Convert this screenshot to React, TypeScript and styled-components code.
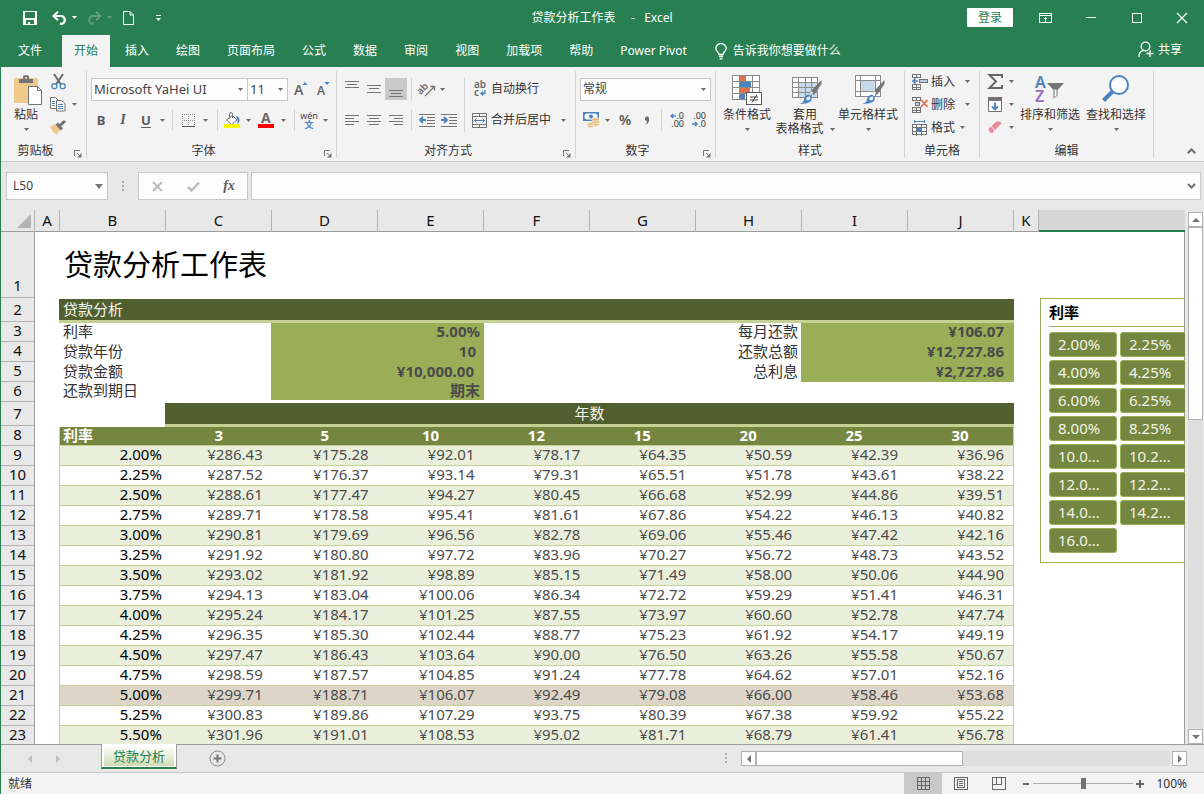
import React from "react";
import styled, { createGlobalStyle, css } from "styled-components";

const c = {
  brand: "#287f51",
  ribbon: "#f3f3f3",
  chrome: "#e8e8e8",
  line: "#c8c8c8",
  gridLine: "#9c9c9c",
  text: "#333333",
  icon: "#737373",
  blue: "#4a83bd",
  olive: "#515f2e",
  oliveMid: "#758640",
  oliveSoft: "#9aae57",
  olivePale: "#c4d193",
  band: "#eaefdc",
  tan: "#ddd5c8",
};

const GlobalStyle = createGlobalStyle`
  * { box-sizing: border-box; }
  body { margin: 0; }
  body, button, input, select, table {
    font-family: "Noto Sans", "Noto Sans CJK SC", sans-serif;
    font-size: 12px;
    color: ${c.text};
  }
  button, input, select { margin: 0; padding: 0; border: 0; background: none; border-radius: 0; outline: 0; }
  button { white-space: nowrap; }
  svg { display: block; flex: none; overflow: visible; }
`;

/* ---------- shell ---------- */

const Shell = styled.div`
  display: flex;
  flex-direction: column;
  height: 100vh;
  overflow: hidden;
`;

const Workspace = styled.main`
  flex: 1;
  min-height: 0;
  display: flex;
  flex-direction: column;
  border-left: 1px solid ${c.brand};
  background: ${c.chrome};
`;

/* ---------- title bar ---------- */

const TitleBar = styled.header`
  display: grid;
  grid-template-columns: 1fr auto 1fr;
  align-items: center;
  height: 35px;
  background: ${c.brand};
`;

const QuickAccess = styled.div`
  display: flex;
  align-items: center;
  gap: 5px;
  padding-left: 17px;
`;

const Title = styled.h1`
  margin: 0;
  font-size: 12px;
  font-weight: 400;
  line-height: 18px;
  color: #fff;
  white-space: pre;
`;

const WindowTools = styled.div`
  display: flex;
  align-items: center;
  justify-content: flex-end;
`;

const LoginButton = styled.button`
  width: 46px;
  height: 19px;
  margin-right: 9px;
  border-radius: 1px;
  background: #fff;
  color: ${c.brand};
  line-height: 19px;
`;

const IconButton = styled.button<{ $w?: number; $h?: number; $on?: boolean }>`
  display: flex;
  flex: none;
  align-items: center;
  justify-content: center;
  width: ${(p) => p.$w ?? 22}px;
  height: ${(p) => p.$h ?? 22}px;
  ${(p) => p.$on && css`background: #c9c9c9;`}
`;

/* ---------- tabs ---------- */

const TabBar = styled.nav`
  display: flex;
  align-items: stretch;
  gap: 3px;
  height: 32px;
  padding-left: 6px;
  background: ${c.brand};
`;

const Tab = styled.button<{ $active?: boolean; $first?: boolean }>`
  padding: 0 12px;
  line-height: 30px;
  margin-right: ${(p) => (p.$first ? 5 : 0)}px;
  color: ${(p) => (p.$active ? c.brand : "#fff")};
  background: ${(p) => (p.$active ? c.ribbon : "transparent")};
`;

const TabAction = styled.button<{ $end?: boolean }>`
  display: flex;
  align-items: center;
  gap: 6px;
  padding: 0 0 0 13px;
  line-height: 30px;
  color: #fff;
  ${(p) => p.$end && css`gap: 4px; margin-left: auto; padding: 0 22px 3px 0;`}
`;

/* ---------- ribbon ---------- */

const Ribbon = styled.section`
  display: flex;
  height: 95px;
  padding: 4px 0;
  background: ${c.ribbon};
  border-bottom: 1px solid ${c.line};
`;

const Group = styled.div<{ $w: number }>`
  display: flex;
  flex-direction: column;
  flex: none;
  width: ${(p) => p.$w}px;
  height: 87px;
  border-right: 1px solid #d4d4d4;
`;

const GroupBody = styled.div<{ $pad?: number }>`
  display: flex;
  flex: 1;
  min-height: 0;
  padding-left: ${(p) => p.$pad ?? 4}px;
`;

const GroupFooter = styled.div`
  display: flex;
  align-items: flex-end;
  height: 15px;
`;

const GroupLabel = styled.span`
  flex: 1;
  line-height: 14px;
  text-align: center;
`;

const RibbonEnd = styled.div`
  display: flex;
  flex: 1;
  align-items: flex-end;
  justify-content: flex-end;
  padding-right: 2px;
`;

const Rows = styled.div`
  display: flex;
  flex-direction: column;
  gap: 9px;
  padding-top: 7px;
`;

const Row = styled.div`
  display: flex;
  align-items: center;
  height: 22px;
`;

const SmallRows = styled.div`
  display: flex;
  flex-direction: column;
  gap: 2px;
`;

const SmallRow = styled.div`
  display: flex;
  align-items: center;
  height: 21px;
`;

const Divider = styled.span<{ $tall?: boolean; $m?: number }>`
  flex: none;
  width: 1px;
  height: ${(p) => (p.$tall ? 54 : 22)}px;
  margin: ${(p) => (p.$tall ? 7 : 0)}px ${(p) => p.$m ?? 5}px 0;
  background: #d4d4d4;
`;

const BigButton = styled.button<{ $w: number }>`
  display: flex;
  flex-direction: column;
  align-items: center;
  width: ${(p) => p.$w}px;
  padding-top: 4px;
  line-height: 14px;
`;

const BigIcon = styled.span`
  height: 33px;
`;

const BigLine = styled.span`
  display: flex;
  align-items: center;
  justify-content: center;
  gap: 6px;
  height: 14px;
`;

const TextButton = styled.button<{ $w?: number }>`
  display: flex;
  align-items: center;
  height: 22px;
  line-height: 20px;
  ${(p) => p.$w && css`width: ${p.$w}px;`}
`;

const IconSlot = styled.span`
  display: flex;
  justify-content: center;
  width: 22px;
`;

const SelectBox = styled.label<{ $w: number; $joined?: boolean }>`
  display: flex;
  align-items: center;
  width: ${(p) => p.$w}px;
  height: 23px;
  padding-right: 4px;
  background: #fdfdfd;
  border: 1px solid ${c.line};
  ${(p) => p.$joined && css`border-left: 0;`}
`;

const Select = styled.select<{ $size?: number }>`
  flex: 1;
  min-width: 0;
  appearance: none;
  padding-left: 2px;
  font-size: ${(p) => p.$size ?? 12}px;
  line-height: 20px;
  color: #444;
`;

const Glyph = styled.span<{ $italic?: boolean; $underline?: boolean; $size?: number }>`
  font-size: ${(p) => p.$size ?? 13}px;
  font-weight: ${(p) => (p.$size ? 600 : 700)};
  line-height: 18px;
  color: #5c5c5c;
  ${(p) => p.$italic && css`font-family: "Liberation Serif", serif; font-style: italic; font-size: 14px;`}
  ${(p) => p.$underline && css`text-decoration: underline; text-underline-offset: 2px;`}
`;

/* ---------- formula bar ---------- */

const FormulaBar = styled.div`
  display: flex;
  align-items: center;
  height: 48px;
  padding: 0 3px 0 5px;
`;

const Field = styled.div<{ $w?: number }>`
  display: flex;
  align-items: center;
  height: 28px;
  background: #fdfdfd;
  border: 1px solid ${c.line};
  ${(p) => (p.$w ? css`flex: none; width: ${p.$w}px;` : css`flex: 1; margin-left: 3px;`)}
  padding-right: 4px;
`;

const FieldInput = styled.input`
  flex: 1;
  min-width: 0;
  padding-left: 6px;
  line-height: 20px;
  color: #444;
`;

const Grip = styled.span`
  display: flex;
  justify-content: center;
  width: 30px;
`;

/* ---------- sheet ---------- */

const SheetArea = styled.div`
  display: flex;
  flex: 1;
  min-height: 0;
`;

const Sheet = styled.div`
  flex: 1;
  min-width: 0;
  overflow: hidden;
`;

const ColumnHeads = styled.div`
  display: flex;
  height: 22px;
`;

const Corner = styled.div`
  display: flex;
  flex: none;
  align-items: center;
  justify-content: flex-end;
  width: 34px;
  padding-right: 3px;
  border-right: 1px solid #b4b4b4;
  border-bottom: 1px solid ${c.gridLine};
`;

const ColumnHead = styled.div<{ $w?: number; $selected?: boolean }>`
  ${(p) => (p.$w ? css`flex: none; width: ${p.$w}px;` : css`flex: 1;`)}
  border-right: 1px solid #b4b4b4;
  border-bottom: 1px solid ${c.gridLine};
  font-size: 15px;
  line-height: 21px;
  text-align: center;
  color: #111;
  ${(p) => p.$selected && css`
    border-right: 0;
    border-bottom: 2px solid ${c.brand};
    background: #d6d6d6;
  `}
`;

const SheetBody = styled.div`
  display: flex;
  align-items: flex-start;
  background: #fff;
  border-right: 1px solid ${c.gridLine};
`;

const RowHeads = styled.div`
  flex: none;
  width: 34px;
  background: ${c.chrome};
  border-right: 1px solid ${c.gridLine};
`;

const RowHead = styled.div<{ $h: number }>`
  display: flex;
  align-items: flex-end;
  justify-content: center;
  height: ${(p) => p.$h}px;
  padding-bottom: 2px;
  border-bottom: 1px solid #b4b4b4;
  font-size: 15px;
  line-height: ${(p) => (p.$h > 20 ? 19 : 17)}px;
  color: #111;
`;

const Content = styled.div`
  flex: none;
  width: 955px;
  margin-left: 24px;
`;

const SheetTitle = styled.h2`
  height: 67px;
  margin: 0;
  padding-left: 5px;
  font-size: 29px;
  font-weight: 400;
  line-height: 65px;
  color: #000;
`;

const SectionBand = styled.div<{ $center?: boolean }>`
  height: 24px;
  padding: 0 4px;
  margin-left: ${(p) => (p.$center ? 106 : 0)}px;
  background: ${c.olive};
  border-bottom: 3px solid ${c.olivePale};
  font-size: 15px;
  line-height: 21px;
  color: #f4f5ee;
  text-align: ${(p) => (p.$center ? "center" : "left")};
`;

const Table = styled.table`
  width: 100%;
  table-layout: fixed;
  border-collapse: separate;
  border-spacing: 0;
`;

const SummaryArea = styled.div`
  height: 80px;
`;

const SummaryRow = styled.tr<{ $h: number }>`
  height: ${(p) => p.$h}px;
`;

const SummaryLabel = styled.th<{ $right?: boolean }>`
  padding: 0 ${(p) => (p.$right ? 3 : 4)}px 2px;
  font-size: 15px;
  font-weight: 400;
  line-height: 15px;
  text-align: ${(p) => (p.$right ? "right" : "left")};
`;

const SummaryValue = styled.td<{ $pad: number }>`
  padding: 0 ${(p) => p.$pad}px 2px 0;
  background: ${c.oliveSoft};
  font-size: 15px;
  font-weight: 700;
  line-height: 15px;
  text-align: right;
  color: #4a4a4a;
`;

const PayTable = styled(Table)`
  border-left: 1px solid ${c.olivePale};
  border-right: 1px solid ${c.olivePale};
`;

const PayHead = styled.th<{ $left?: boolean }>`
  height: 19px;
  padding: 0 3px 3px;
  background: ${c.oliveMid};
  border-bottom: 1px solid ${c.olivePale};
  font-size: 15px;
  line-height: 14px;
  color: #fff;
  text-align: ${(p) => (p.$left ? "left" : "center")};
`;

const PayRow = styled.tr<{ $tone: string }>`
  background: ${(p) => p.$tone};
`;

const PayCell = styled.td`
  height: 20px;
  padding: 0 9px 2px 0;
  border-bottom: 1px solid ${c.olivePale};
  font-size: 15px;
  line-height: 17px;
  text-align: right;
  color: #4c4c4c;
`;

const RateCell = styled(PayCell).attrs({ as: "th" })`
  padding-right: 4px;
  font-weight: 400;
  color: #000;
`;

/* ---------- slicer ---------- */

const Slicer = styled.aside`
  flex: none;
  width: 160px;
  height: 265px;
  margin: 66px 0 0 26px;
  padding-left: 8px;
  border: 1px solid ${c.oliveSoft};
`;

const SlicerTitle = styled.h3`
  margin: 0 0 5px;
  border-bottom: 1px solid ${c.oliveSoft};
  font-size: 15px;
  line-height: 27px;
  color: #000;
`;

const SlicerGrid = styled.div`
  display: grid;
  grid-template-columns: 68px 68px;
  gap: 3px;
`;

const SlicerButton = styled.button`
  height: 25px;
  padding-left: 8px;
  border: 1px solid ${c.oliveSoft};
  border-radius: 3px;
  background: ${c.oliveMid};
  font-size: 15px;
  line-height: 23px;
  text-align: left;
  color: #f1f4e8;
`;

/* ---------- scroll bars ---------- */

const VScroll = styled.div`
  display: flex;
  flex-direction: column;
  flex: none;
  width: 19px;
  padding: 2px 1px 0 3px;
`;

const ScrollButton = styled.button`
  display: flex;
  flex: none;
  align-items: center;
  justify-content: center;
  width: 15px;
  height: 15px;
  background: #fff;
  border: 1px solid #b0b0b0;
`;

const Track = styled.div<{ $horizontal?: boolean }>`
  flex: 1;
  background: #dedede;
  ${(p) => (p.$horizontal ? css`height: 15px; margin-right: 2px;` : css`margin-bottom: 1px;`)}
`;

const Thumb = styled.div<{ $horizontal?: boolean }>`
  background: #fff;
  border: 1px solid #b0b0b0;
  ${(p) => (p.$horizontal ? css`width: 50%; height: 15px;` : css`width: 15px; height: 38.5%;`)}
`;

/* ---------- bottom bars ---------- */

const SheetTabs = styled.div`
  display: flex;
  align-items: center;
  height: 28px;
  padding-left: 15px;
  border-top: 1px solid ${c.gridLine};
`;

const SheetTab = styled.button`
  align-self: flex-start;
  width: 76px;
  height: 25px;
  margin: -1px 30px 0 29px;
  padding: 2px 2px 1px;
  background: #fff;
  border: 1px solid ${c.gridLine};
  border-top: 0;
  border-bottom: 2px solid ${c.brand};
`;

const SheetTabFace = styled.span`
  display: block;
  background: linear-gradient(#fff, #cfdcb4);
  font-size: 13px;
  line-height: 20px;
  color: ${c.brand};
`;

const HScroll = styled.div`
  display: flex;
  align-items: center;
  width: 446px;
  margin-right: 17px;
`;

const Spacer = styled.span`
  flex: 1;
`;

const StatusBar = styled.footer`
  display: flex;
  align-items: center;
  height: 22px;
  padding: 0 17px 0 7px;
  background: ${c.ribbon};
  border-top: 1px solid ${c.line};
  line-height: 18px;
`;

const ZoomSlider = styled.input`
  appearance: none;
  width: 100px;
  height: 14px;
  &::-webkit-slider-runnable-track {
    height: 14px;
    background: linear-gradient(#adadad, #adadad) center / 100% 1px no-repeat;
  }
  &::-webkit-slider-thumb {
    appearance: none;
    width: 5px;
    height: 11px;
    margin-top: 1px;
    background: #737373;
  }
`;

const ZoomValue = styled.span`
  width: 41px;
  text-align: right;
`;

/* ---------- icons ---------- */

type Box = { w: number; h: number; crisp?: boolean; children: React.ReactNode };
const Svg = ({ w, h, crisp, children }: Box) => (
  <svg width={w} height={h} viewBox={`0 0 ${w} ${h}`} fill="none" shapeRendering={crisp ? "crispEdges" : "auto"} aria-hidden="true">
    {children}
  </svg>
);

const Caret = ({ color = "#6a6a6a" }: { color?: string }) => (
  <Svg w={5} h={3}><path d="M0 0h5L2.5 3z" fill={color} /></Svg>
);

const BoxCaret = () => <Svg w={8} h={5}><path d="M0 0h8L4 5z" fill="#777" /></Svg>;

const SaveIcon = () => (
  <Svg w={14} h={14} crisp>
    <path fillRule="evenodd" d="M0 0h14v14H0zM2 1v6h10V1zM3 9v4h2v-2h2v2h4V9z" fill="#fff" />
  </Svg>
);
const UndoIcon = () => (
  <Svg w={15} h={14}>
    <path d="M1.500 5H9a4 4 0 0 1 1 7.800H8M6 .8 1.600 5 6 9.200" stroke="#fff" strokeWidth={2.200} />
  </Svg>
);
const RedoIcon = () => (
  <Svg w={15} h={14}>
    <path d="M13.500 5H6a4 4 0 0 0-1 7.800h2M9 .8 13.400 5 9 9.200" stroke="#5f9f7d" strokeWidth={2} />
  </Svg>
);
const NewIcon = () => (
  <Svg w={11} h={14}><path d="M.5.5h6.500l3.500 3.500v9.500H.5zM7 .5V4h3.500" stroke="#fff" /></Svg>
);
const CustomizeIcon = () => (
  <Svg w={5} h={6}><path d="M0 0h5v1H0zM0 3h5L2.500 6z" fill="#fff" /></Svg>
);
const RibbonModeIcon = () => (
  <Svg w={13} h={10} crisp>
    <path d="M.5.5h12v9H.5zM.5 2.500h12M6.500 4v5M4.500 6.500l2-2 2 2" stroke="#fff" />
  </Svg>
);
const MinIcon = () => <Svg w={10} h={1} crisp><path d="M0 0h10v1H0z" fill="#fff" /></Svg>;
const MaxIcon = () => <Svg w={10} h={10} crisp><path d="M.5.5h9v9h-9z" stroke="#fff" /></Svg>;
const CloseIcon = () => <Svg w={10} h={10}><path d="m0 0 10 10M10 0 0 10" stroke="#fff" strokeWidth={1.200} /></Svg>;

const BulbIcon = () => (
  <Svg w={12} h={17}>
    <path d="M4 11.500C4 9 .8 8.300.8 5.300a5.200 4.800 0 0 1 10.400 0c0 3-3.200 3.700-3.200 6.200zM4 13.500h4M4.500 15.800h3" stroke="#fff" strokeWidth={1.300} />
  </Svg>
);
const ShareIcon = () => (
  <Svg w={16} h={17}>
    <circle cx={7.500} cy={5.500} r={4.300} stroke="#fff" strokeWidth={1.300} />
    <path d="M.8 16c0-3.500 2-6 4.700-6.700M12 9v7M8.500 12.500h7" stroke="#fff" strokeWidth={1.300} />
  </Svg>
);

const PasteIcon = () => (
  <Svg w={32} h={30}>
    <rect x={4} y={3} width={24} height={25} rx={1} fill="#efcb8b" />
    <path d="M9 4h4V1.500Q13 0 16 0t3 1.500V4h4v4H9z" fill="#737373" />
    <rect x={15} y={2} width={2} height={2} fill="#efcb8b" />
    <path d="M18.500 11.500h9l4 4v14h-13z" fill="#fff" stroke="#737373" />
    <path d="M27.500 11.500v4h4" stroke="#737373" />
  </Svg>
);
const CutIcon = () => (
  <Svg w={15} h={16}>
    <path d="M3 0 10 10.500M12 0 5 10.500" stroke="#6a6a6a" strokeWidth={2} />
    <circle cx={3.300} cy={12.200} r={2.500} stroke={c.blue} strokeWidth={1.300} />
    <circle cx={11.700} cy={12.200} r={2.500} stroke={c.blue} strokeWidth={1.300} />
  </Svg>
);
const CopyIcon = () => (
  <Svg w={16} h={15}>
    <path d="M.5.5h5l3 3v8h-8z" fill="#fff" stroke="#737373" />
    <path d="M2 4.500h3M2 6.500h3M2 8.500h3" stroke={c.blue} />
    <path d="M6.500 3.500h5l3.500 3v7.500h-8.500z" fill="#fff" stroke="#737373" />
    <path d="M8 7.500h5M8 9.500h5M8 11.500h5" stroke={c.blue} />
  </Svg>
);
const PainterIcon = () => (
  <Svg w={17} h={15}>
    <path d="m0 7 5-3 5 6-3 4.500-3-1.500z" fill="#efc58a" />
    <path d="m5.500 4.500 2.500-2 5 6-2.500 2z" fill="#737373" />
    <path d="M10 5.500 15 1" stroke="#737373" strokeWidth={3} />
  </Svg>
);
const LauncherIcon = () => (
  <Svg w={8} h={8}>
    <path d="M.5 6V.5H6M3 3l3 3" stroke="#777" />
    <path d="M7.500 3v4.500H3z" fill="#777" />
  </Svg>
);

const GrowFont = () => (
  <Svg w={14} h={16}>
    <text x={0} y={14} fontSize={14} fontWeight={600} fill="#6a6a6a" fontFamily="Noto Sans">A</text>
    <path d="M8.500 4h5L11 1z" fill={c.blue} />
  </Svg>
);
const ShrinkFont = () => (
  <Svg w={14} h={16}>
    <text x={1} y={14} fontSize={12} fontWeight={600} fill="#6a6a6a" fontFamily="Noto Sans">A</text>
    <path d="M8.500 1h5L11 4z" fill={c.blue} />
  </Svg>
);
const BordersIcon = () => (
  <Svg w={13} h={13} crisp>
    <path d="M.5 0v12M6.500 0v12M12.500 0v12M0 .5h13M0 6.500h13" stroke="#8a8a8a" strokeDasharray="1 1" />
    <path d="M0 12.500h13" stroke="#555" />
  </Svg>
);
const FillIcon = () => (
  <Svg w={16} h={16}>
    <path d="M8.500 3.500 13 8l-5.500 4.500L2.500 8z" fill="#fff" stroke="#737373" />
    <path d="M5.500 6.500V2q0-1.500 1.500-1.500T8.500 2v4" stroke="#737373" />
    <path d="M12 4q4 .5 3.500 5.500l-2 2.500V8z" fill={c.blue} />
    <rect y={12} width={16} height={4} fill="#ff0" />
  </Svg>
);
const FontColorIcon = () => (
  <Svg w={16} h={16}>
    <text x={3} y={11} fontSize={14} fontWeight={700} fill="#6a6a6a" fontFamily="Noto Sans">A</text>
    <rect y={12} width={16} height={4} fill="#f00" />
  </Svg>
);
const PhoneticIcon = () => (
  <Svg w={18} h={17}>
    <text x={9} y={7} fontSize={9} textAnchor="middle" fill="#444" fontFamily="Noto Sans">wén</text>
    <text x={9} y={16} fontSize={9} fontWeight={700} textAnchor="middle" fill={c.blue} fontFamily="Noto Sans CJK SC">文</text>
  </Svg>
);

const Lines = ({ rows }: { rows: [number, number, number][] }) => (
  <Svg w={14} h={18} crisp>
    {rows.map(([x, y, w]) => <rect key={y} x={x} y={y} width={w} height={1} fill="#737373" />)}
  </Svg>
);
const alignTop: [number, number, number][] = [[0, 1, 14], [2, 4, 10], [0, 7, 14]];
const alignMid: [number, number, number][] = [[0, 5, 14], [2, 8, 10], [0, 12, 14]];
const alignLow: [number, number, number][] = [[0, 10, 14], [2, 13, 10], [0, 16, 14]];
const alignLeft: [number, number, number][] = [[0, 4, 14], [0, 7, 9], [0, 10, 14], [0, 13, 9]];
const alignCenter: [number, number, number][] = [[0, 4, 14], [2, 7, 10], [0, 10, 14], [2, 13, 10]];
const alignRight: [number, number, number][] = [[0, 4, 14], [5, 7, 9], [0, 10, 14], [5, 13, 9]];

const OrientIcon = () => (
  <Svg w={17} h={16}>
    <text x={-2} y={10} fontSize={10} fontWeight={600} fill="#6a6a6a" fontFamily="Noto Sans" transform="rotate(-45 5 8)">ab</text>
    <path d="M6 15 15 6M11.500 5.500H15.500V9.500" stroke="#737373" strokeWidth={1.300} />
  </Svg>
);
const IndentIcon = ({ right }: { right?: boolean }) => (
  <Svg w={16} h={13}>
    <path d="M0 .5h16M8 3.500h8M8 6.500h8M8 9.500h8M0 12.500h16" stroke="#737373" shapeRendering="crispEdges" />
    <path d={right ? "M0 6h5M3 3l3 3-3 3" : "M1 6h6M4 3 1 6l3 3"} stroke={c.blue} strokeWidth={1.800} />
  </Svg>
);
const WrapIcon = () => (
  <Svg w={14} h={16}>
    <text x={1} y={7} fontSize={10} fontWeight={600} fill="#6a6a6a" fontFamily="Noto Sans">ab</text>
    <text x={1} y={15} fontSize={10} fontWeight={600} fill="#6a6a6a" fontFamily="Noto Sans">c</text>
    <path d="M12 9v3.500H8M10 10.500l-2 2 2 2" stroke={c.blue} strokeWidth={1.300} />
  </Svg>
);
const MergeIcon = () => (
  <Svg w={16} h={15}>
    <path d="M.5.5h14v14H.5zM.5 3.500h14M.5 11.500h14M7.500.5v3M7.500 11.500v3" stroke="#737373" fill="none" />
    <path d="M2 7.500h11M4.500 5.500l-2 2 2 2M10.500 5.500l2 2-2 2" stroke={c.blue} />
  </Svg>
);
const CurrencyIcon = () => (
  <Svg w={17} h={16}>
    <path fillRule="evenodd" d="M0 0h16v9H0zM1.500 3v3L3 7.500h9L14.500 6V3L13 1.500H3z" fill={c.blue} />
    <circle cx={8} cy={4.500} r={2} fill={c.blue} />
    <g fill="#e9bf7c" stroke="#f3f3f3" strokeWidth={0.600}>
      <ellipse cx={12.500} cy={12.500} rx={4} ry={1.700} /><ellipse cx={12.500} cy={10} rx={4} ry={1.700} /><ellipse cx={12.500} cy={7.500} rx={4} ry={1.700} />
      <ellipse cx={7.500} cy={14} rx={3.500} ry={1.500} /><ellipse cx={7.500} cy={12} rx={3.500} ry={1.500} />
    </g>
  </Svg>
);
const CommaIcon = () => (
  <Svg w={6} h={9}>
    <path d="M1 2.500a2 2 0 1 1 3 1.700Q5 3 5 2.500 5.500 7 1.500 9q1.500-2 1.500-4.200A2 2 0 0 1 1 2.500z" fill="#6a6a6a" />
  </Svg>
);
const DecimalIcon = ({ less }: { less?: boolean }) => (
  <Svg w={15} h={15}>
    <text x={14} y={6} fontSize={9} textAnchor="end" fill="#333" fontFamily="Noto Sans">{less ? ".00" : ".0"}</text>
    <text x={14} y={14} fontSize={9} textAnchor="end" fill="#333" fontFamily="Noto Sans">{less ? ".0" : ".00"}</text>
    <path d={less ? "M0 11h5M3 9l2.200 2L3 13" : "M1 3h5M3.200 1 1 3l2.200 2"} stroke={c.blue} strokeWidth={1.500} />
  </Svg>
);

const ConditionalIcon = () => (
  <Svg w={30} h={31} crisp>
    <rect width={28} height={25} fill="#fff" />
    <path d="M8 1h6v5H8zM8 13h10v5H8z" fill="#e0714f" />
    <path d="M8 7h11v5H8zM8 19h5v5H8z" fill="#4a83bd" />
    <path d="M.5.5h27v24H.5zM.5 6.500h27M.5 12.500h27M.5 18.500h27M7.500.5v24M20.500.5v24" stroke="#8a8a8a" />
    <path d="M14.500 17.500h15v12h-15z" fill="#fff" stroke="#555" />
    <path d="M18 22h8M18 25h8M25 19.500l-5 8" stroke="#444" shapeRendering="auto" />
  </Svg>
);
const BrushOverlay = () => (
  <>
    <path d="M29.500 5v4L22 20l-4-3z" fill="#777" />
    <path d="m21 17-3-1 2 4z" fill="#f3f3f3" />
    <path d="M7 29q5-1 5-5 2-5 6-4 3 2 1 6-3 3-12 3z" fill="#4a83bd" />
    <path d="M14 23.500q1.500-2.500 4-2 1 2-.5 3.500l-2.500.5z" fill="#e7eef7" />
  </>
);
const TableStyleIcon = () => (
  <Svg w={26} h={30}>
    <path d="M.5 2.500h25v20H.5z" fill="#fff" />
    <path d="M7 8h18v14H7z" fill="#c9d8ea" />
    <path d="M.5 2.500h25v20H.5zM.5 7.500h25M.5 12.500h25M.5 17.500h25M6.500 2.500v20M13.500 2.500v20M19.500 2.500v20" stroke="#8a8a8a" shapeRendering="crispEdges" />
    <BrushOverlay />
  </Svg>
);
const CellStyleIcon = () => (
  <Svg w={26} h={30}>
    <path d="M.5.5h25v21H.5z" fill="#fff" />
    <path d="M6 6h14v11H6z" fill="#c9d8ea" />
    <path d="M.5.5h25v21H.5zM.5 5.500h25M.5 16.500h25M5.500.5v21M20.500.5v21" stroke="#8a8a8a" shapeRendering="crispEdges" />
    <BrushOverlay />
  </Svg>
);
const InsertIcon = () => (
  <Svg w={16} h={16} crisp>
    <path d="M.5.5h8v3h-8zM4.500.5v3M.5 10.500h8v5h-8zM4.500 10.500v5M.5 13h8" stroke="#737373" />
    <path d="M7.500 5.500h8v3h-8z" fill="#b9cde4" stroke="#737373" />
    <path d="M1 7h5M3.500 4.500 1 7l2.500 2.500" stroke={c.blue} strokeWidth={1.600} shapeRendering="auto" />
  </Svg>
);
const DeleteIcon = () => (
  <Svg w={16} h={16}>
    <path d="M.5.5h8v3h-8zM4.500.5v3M.5 10.500h8v5h-8zM4.500 10.500v5M.5 13h8" stroke="#737373" shapeRendering="crispEdges" />
    <path d="M3.500 5.500h4v3h-4z" fill="#b9cde4" stroke="#737373" shapeRendering="crispEdges" />
    <path d="m9 3 6.500 7M15.500 3 9 10" stroke="#e0714f" strokeWidth={1.800} />
  </Svg>
);
const FormatIcon = () => (
  <Svg w={16} h={16} crisp>
    <path d="M2 1.500h11M2.500 0v3M12.500 0v3" stroke={c.blue} />
    <path d="M.5 4.500h14v10H.5zM.5 7.500h14M.5 11.500h14M4.500 4.500v11M9.500 4.500v11" stroke="#737373" />
    <path d="M5 8h5v4H5z" fill="#4a83bd" />
  </Svg>
);
const SumIcon = () => (
  <Svg w={15} h={15}><path d="M14 4V1H1.500L8 7.500 1.500 14H14v-3" stroke="#666" strokeWidth={2} /></Svg>
);
const FillDownIcon = () => (
  <Svg w={14} h={15}>
    <path d="M.5 2.500h13v12H.5z" fill="#fff" stroke="#737373" />
    <path d="M0 0h14v4H0z" fill="#737373" />
    <path d="M7 5.500v7M4 9.500l3 3 3-3" stroke={c.blue} strokeWidth={1.800} />
  </Svg>
);
const EraserIcon = () => (
  <Svg w={14} h={13}>
    <path d="M8.500.5h3.500l1.500 2L7 9 3.500 5z" fill="#e98b9b" />
    <path d="m2.800 5.600 3.600 4L4.500 12H2.500L.5 9V8z" fill="#e98b9b" />
  </Svg>
);
const SortIcon = () => (
  <Svg w={30} h={30}>
    <text x={0} y={13} fontSize={16} fontWeight={600} fill={c.blue} fontFamily="Noto Sans">A</text>
    <text x={0} y={27} fontSize={16} fontWeight={600} fill="#9d67bd" fontFamily="Noto Sans">Z</text>
    <path d="M12 8h17l-6.500 7v5.500l-4 3V15z" fill="#737373" />
    <path d="M19.500 14.500h2v6l-2 1.500z" fill="#fff" />
  </Svg>
);
const FindIcon = () => (
  <Svg w={28} h={28}>
    <circle cx={17} cy={10} r={9} fill="#fff" stroke={c.blue} strokeWidth={2} />
    <path d="M10.500 16.500 1.500 25.500" stroke={c.blue} strokeWidth={4} />
  </Svg>
);
const Chevron = ({ up }: { up?: boolean }) => (
  <Svg w={9} h={6}><path d={up ? "M.7 5.300 4.500 1.500l3.800 3.800" : "m1 1 3.500 3.500L8 1"} stroke="#6f6f6f" strokeWidth={2} /></Svg>
);
const CancelIcon = () => <Svg w={11} h={11}><path d="m1 1 9 9M10 1l-9 9" stroke="#bdbdbd" strokeWidth={2} /></Svg>;
const CheckIcon = () => <Svg w={13} h={11}><path d="m1 6 3.500 3.500L12 1.500" stroke="#bdbdbd" strokeWidth={2.500} /></Svg>;
const DotsIcon = () => (
  <Svg w={2} h={11} crisp><path d="M0 0h2v2H0zM0 4h2v2H0zM0 8h2v2H0z" fill="#ababab" /></Svg>
);
const Triangle = ({ dir, color = "#737373" }: { dir: "left" | "right" | "up" | "down"; color?: string }) => {
  const d = { left: "M6 0v8L2 4z", right: "M2 0v8l4-4z", up: "M0 6h8L4 2z", down: "M0 2h8L4 6z" }[dir];
  return <Svg w={8} h={8}><path d={d} fill={color} /></Svg>;
};
const AddIcon = () => (
  <Svg w={17} h={17}><circle cx={8.500} cy={8.500} r={7.500} stroke="#8a8a8a" /><path d="M8.500 4.500v8M4.500 8.500h8" stroke="#777" strokeWidth={2} /></Svg>
);
const NormalView = () => (
  <Svg w={13} h={13} crisp><path d="M.5.5h12v12H.5zM.5 4.500h12M.5 8.500h12M4.500.5v12M8.500.5v12" stroke="#666" /></Svg>
);
const LayoutView = () => (
  <Svg w={14} h={13} crisp><path d="M.5.5h13v12H.5zM3.500 2.500h7v8h-7zM5 4.500h4M5 6.500h4M5 8.500h4" stroke="#666" /></Svg>
);
const BreakView = () => (
  <Svg w={14} h={13} crisp><path d="M.5.5h13v12H.5zM4.500.5v7M9.500.5v7M.5 7.500h9" stroke="#666" /></Svg>
);

/* ---------- data ---------- */

const tabs = ["插入", "绘图", "页面布局", "公式", "数据", "审阅", "视图", "加载项", "帮助", "Power Pivot"];
const columns = ["B", "C", "D", "E", "F", "G", "H", "I", "J"];
const years = [3, 5, 10, 12, 15, 20, 25, 30];
const rowHeights = [66, 24, 20, 20, 20, 20, 24, ...Array(17).fill(20)];

const summary = [
  { h: 19, label: "利率", value: "5.00%", pad: 4, label2: "每月还款", value2: "¥106.07" },
  { h: 20, label: "贷款年份", value: "10", pad: 8, label2: "还款总额", value2: "¥12,727.86" },
  { h: 20, label: "贷款金额", value: "¥10,000.00", pad: 10, label2: "总利息", value2: "¥2,727.86" },
  { h: 18, label: "还款到期日", value: "期末", pad: 4 },
];

const payments: [string, ...string[]][] = [
  ["2.00%", "286.43", "175.28", "92.01", "78.17", "64.35", "50.59", "42.39", "36.96"],
  ["2.25%", "287.52", "176.37", "93.14", "79.31", "65.51", "51.78", "43.61", "38.22"],
  ["2.50%", "288.61", "177.47", "94.27", "80.45", "66.68", "52.99", "44.86", "39.51"],
  ["2.75%", "289.71", "178.58", "95.41", "81.61", "67.86", "54.22", "46.13", "40.82"],
  ["3.00%", "290.81", "179.69", "96.56", "82.78", "69.06", "55.46", "47.42", "42.16"],
  ["3.25%", "291.92", "180.80", "97.72", "83.96", "70.27", "56.72", "48.73", "43.52"],
  ["3.50%", "293.02", "181.92", "98.89", "85.15", "71.49", "58.00", "50.06", "44.90"],
  ["3.75%", "294.13", "183.04", "100.06", "86.34", "72.72", "59.29", "51.41", "46.31"],
  ["4.00%", "295.24", "184.17", "101.25", "87.55", "73.97", "60.60", "52.78", "47.74"],
  ["4.25%", "296.35", "185.30", "102.44", "88.77", "75.23", "61.92", "54.17", "49.19"],
  ["4.50%", "297.47", "186.43", "103.64", "90.00", "76.50", "63.26", "55.58", "50.67"],
  ["4.75%", "298.59", "187.57", "104.85", "91.24", "77.78", "64.62", "57.01", "52.16"],
  ["5.00%", "299.71", "188.71", "106.07", "92.49", "79.08", "66.00", "58.46", "53.68"],
  ["5.25%", "300.83", "189.86", "107.29", "93.75", "80.39", "67.38", "59.92", "55.22"],
  ["5.50%", "301.96", "191.01", "108.53", "95.02", "81.71", "68.79", "61.41", "56.78"],
];

const slicerItems = [
  "2.00%", "2.25%", "4.00%", "4.25%", "6.00%", "6.25%", "8.00%", "8.25%",
  "10.0...", "10.2...", "12.0...", "12.2...", "14.0...", "14.2...", "16.0...",
];

const toneFor = (rate: string, i: number) => (rate === "5.00%" ? c.tan : i % 2 ? "#fff" : c.band);

/* ---------- parts ---------- */

const Drop = ({ w = 10, label, color }: { w?: number; label: string; color?: string }) => (
  <IconButton $w={w} aria-label={label}><Caret color={color} /></IconButton>
);

const Footer = ({ label, launcher }: { label: string; launcher?: boolean }) => (
  <GroupFooter>
    <GroupLabel>{label}</GroupLabel>
    {launcher && <IconButton $w={16} $h={8} aria-label={`${label}设置`}><LauncherIcon /></IconButton>}
  </GroupFooter>
);

const Big = ({ w, icon, top, bottom }: { w: number; icon: React.ReactNode; top: string; bottom?: string }) => (
  <BigButton $w={w}>
    <BigIcon>{icon}</BigIcon>
    <BigLine>{top}</BigLine>
    <BigLine>{bottom}<Caret /></BigLine>
  </BigButton>
);

export default function App() {
  return (
    <Shell>
      <GlobalStyle />
      <TitleBar>
        <QuickAccess>
          <IconButton $w={26} aria-label="保存"><SaveIcon /></IconButton>
          <Row>
            <IconButton aria-label="撤消"><UndoIcon /></IconButton>
            <Drop w={8} label="撤消列表" color="#fff" />
          </Row>
          <Row>
            <IconButton aria-label="恢复"><RedoIcon /></IconButton>
            <Drop w={8} label="恢复列表" color="#5f9f7d" />
          </Row>
          <IconButton $w={20} aria-label="新建"><NewIcon /></IconButton>
          <IconButton $w={30} aria-label="自定义快速访问工具栏"><CustomizeIcon /></IconButton>
        </QuickAccess>
        <Title>{"贷款分析工作表     -   Excel"}</Title>
        <WindowTools>
          <LoginButton>登录</LoginButton>
          <IconButton $w={46} aria-label="功能区显示选项"><RibbonModeIcon /></IconButton>
          <IconButton $w={46} aria-label="最小化"><MinIcon /></IconButton>
          <IconButton $w={46} aria-label="最大化"><MaxIcon /></IconButton>
          <IconButton $w={44} aria-label="关闭"><CloseIcon /></IconButton>
        </WindowTools>
      </TitleBar>

      <TabBar>
        <Tab $first>文件</Tab>
        <Tab $active>开始</Tab>
        {tabs.map((t) => <Tab key={t}>{t}</Tab>)}
        <TabAction><BulbIcon />告诉我你想要做什么</TabAction>
        <TabAction $end><ShareIcon />共享</TabAction>
      </TabBar>

      <Workspace>
        <Ribbon>
          <Group $w={86}>
            <GroupBody $pad={1}>
              <Big w={48} icon={<PasteIcon />} top="粘贴" />
              <SmallRows>
                <SmallRow><IconButton $w={16} aria-label="剪切"><CutIcon /></IconButton></SmallRow>
                <SmallRow><IconButton $w={16} aria-label="复制"><CopyIcon /></IconButton><Drop w={17} label="复制选项" /></SmallRow>
                <SmallRow><IconButton $w={16} aria-label="格式刷"><PainterIcon /></IconButton></SmallRow>
              </SmallRows>
            </GroupBody>
            <Footer label="剪贴板" launcher />
          </Group>

          <Group $w={250}>
            <GroupBody>
              <Rows>
                <Row>
                  <SelectBox $w={157}>
                    <Select $size={13} aria-label="字体"><option>Microsoft YaHei UI</option></Select><Caret />
                  </SelectBox>
                  <SelectBox $w={40} $joined>
                    <Select $size={13} aria-label="字号"><option>11</option></Select><Caret />
                  </SelectBox>
                  <IconButton $w={26} aria-label="增大字号"><GrowFont /></IconButton>
                  <IconButton $w={18} aria-label="减小字号"><ShrinkFont /></IconButton>
                </Row>
                <Row>
                  <IconButton $w={20} aria-label="加粗"><Glyph>B</Glyph></IconButton>
                  <IconButton $w={24} aria-label="倾斜"><Glyph $italic>I</Glyph></IconButton>
                  <IconButton $w={22} aria-label="下划线"><Glyph $underline>U</Glyph></IconButton>
                  <Drop label="下划线选项" />
                  <Divider />
                  <IconButton $w={20} aria-label="边框"><BordersIcon /></IconButton>
                  <Drop w={14} label="边框选项" />
                  <Divider />
                  <IconButton $w={18} aria-label="填充颜色"><FillIcon /></IconButton>
                  <Drop w={14} label="填充颜色选项" />
                  <IconButton $w={22} aria-label="字体颜色"><FontColorIcon /></IconButton>
                  <Drop w={12} label="字体颜色选项" />
                  <Divider />
                  <IconButton $w={18} aria-label="拼音"><PhoneticIcon /></IconButton>
                  <Drop w={14} label="拼音选项" />
                </Row>
              </Rows>
            </GroupBody>
            <Footer label="字体" launcher />
          </Group>

          <Group $w={239}>
            <GroupBody>
              <Rows>
                <Row>
                  <IconButton aria-label="顶端对齐"><Lines rows={alignTop} /></IconButton>
                  <IconButton aria-label="垂直居中"><Lines rows={alignMid} /></IconButton>
                  <IconButton $on aria-label="底端对齐"><Lines rows={alignLow} /></IconButton>
                  <Divider $m={4} />
                  <IconButton aria-label="方向"><OrientIcon /></IconButton>
                  <Drop w={8} label="方向选项" />
                </Row>
                <Row>
                  <IconButton aria-label="左对齐"><Lines rows={alignLeft} /></IconButton>
                  <IconButton aria-label="居中"><Lines rows={alignCenter} /></IconButton>
                  <IconButton aria-label="右对齐"><Lines rows={alignRight} /></IconButton>
                  <Divider $m={4} />
                  <IconButton aria-label="减少缩进量"><IndentIcon /></IconButton>
                  <IconButton aria-label="增加缩进量"><IndentIcon right /></IconButton>
                </Row>
              </Rows>
              <Divider $tall $m={4} />
              <Rows>
                <TextButton><IconSlot><WrapIcon /></IconSlot>自动换行</TextButton>
                <Row>
                  <TextButton $w={86}><IconSlot><MergeIcon /></IconSlot>合并后居中</TextButton>
                  <Drop w={16} label="合并选项" />
                </Row>
              </Rows>
            </GroupBody>
            <Footer label="对齐方式" launcher />
          </Group>

          <Group $w={140}>
            <GroupBody>
              <Rows>
                <Row>
                  <SelectBox $w={131}>
                    <Select aria-label="数字格式"><option>常规</option></Select><Caret />
                  </SelectBox>
                </Row>
                <Row>
                  <IconButton aria-label="会计数字格式"><CurrencyIcon /></IconButton>
                  <Drop label="会计格式选项" />
                  <IconButton $w={26} aria-label="百分比样式"><Glyph $size={14}>%</Glyph></IconButton>
                  <IconButton $w={18} aria-label="千位分隔样式"><CommaIcon /></IconButton>
                  <Divider />
                  <IconButton $w={20} aria-label="增加小数位数"><DecimalIcon /></IconButton>
                  <IconButton $w={24} aria-label="减少小数位数"><DecimalIcon less /></IconButton>
                </Row>
              </Rows>
            </GroupBody>
            <Footer label="数字" launcher />
          </Group>

          <Group $w={189}>
            <GroupBody $pad={2}>
              <Big w={58} icon={<ConditionalIcon />} top="条件格式" />
              <Big w={58} icon={<TableStyleIcon />} top="套用" bottom="表格格式" />
              <Big w={68} icon={<CellStyleIcon />} top="单元格样式" />
            </GroupBody>
            <Footer label="样式" />
          </Group>

          <Group $w={75}>
            <GroupBody>
              <SmallRows>
                <SmallRow><TextButton $w={52}><IconSlot><InsertIcon /></IconSlot>插入</TextButton><Drop w={12} label="插入选项" /></SmallRow>
                <SmallRow><TextButton $w={52}><IconSlot><DeleteIcon /></IconSlot>删除</TextButton><Drop w={12} label="删除选项" /></SmallRow>
                <SmallRow><TextButton $w={56}><IconSlot><FormatIcon /></IconSlot>格式<Spacer /><Caret /></TextButton></SmallRow>
              </SmallRows>
            </GroupBody>
            <Footer label="单元格" />
          </Group>

          <Group $w={174}>
            <GroupBody>
              <SmallRows>
                <SmallRow><IconButton aria-label="自动求和"><SumIcon /></IconButton><Drop label="求和选项" /></SmallRow>
                <SmallRow><IconButton aria-label="填充"><FillDownIcon /></IconButton><Drop label="填充选项" /></SmallRow>
                <SmallRow><IconButton aria-label="清除"><EraserIcon /></IconButton><Drop label="清除选项" /></SmallRow>
              </SmallRows>
              <Big w={68} icon={<SortIcon />} top="排序和筛选" />
              <Big w={64} icon={<FindIcon />} top="查找和选择" />
            </GroupBody>
            <Footer label="编辑" />
          </Group>

          <RibbonEnd><IconButton $h={12} aria-label="折叠功能区"><Chevron up /></IconButton></RibbonEnd>
        </Ribbon>

        <FormulaBar>
          <Field $w={102}><FieldInput aria-label="名称框" defaultValue="L50" /><BoxCaret /></Field>
          <Grip><DotsIcon /></Grip>
          <Field $w={110}>
            <IconButton $w={36} aria-label="取消"><CancelIcon /></IconButton>
            <IconButton $w={36} aria-label="输入"><CheckIcon /></IconButton>
            <IconButton $w={36} aria-label="插入函数"><Glyph $italic>fx</Glyph></IconButton>
          </Field>
          <Field><FieldInput aria-label="编辑栏" /><Chevron /></Field>
        </FormulaBar>

        <SheetArea>
          <Sheet>
            <ColumnHeads>
              <Corner><Svg w={14} h={14}><path d="M14 0v14H0z" fill="#b4b4b4" /></Svg></Corner>
              <ColumnHead $w={25}>A</ColumnHead>
              {columns.map((n) => <ColumnHead key={n} $w={106}>{n}</ColumnHead>)}
              <ColumnHead $w={25}>K</ColumnHead>
              <ColumnHead $selected />
            </ColumnHeads>
            <SheetBody>
              <RowHeads>
                {rowHeights.map((h, i) => <RowHead key={i} $h={h}>{i + 1}</RowHead>)}
              </RowHeads>
              <Content>
                <SheetTitle>贷款分析工作表</SheetTitle>
                <SectionBand>贷款分析</SectionBand>
                <SummaryArea>
                  <Table>
                    <colgroup>
                      <col style={{ width: 212 }} /><col style={{ width: 213 }} /><col style={{ width: 317 }} /><col style={{ width: 213 }} />
                    </colgroup>
                    <tbody>
                      {summary.map((s) => (
                        <SummaryRow key={s.label} $h={s.h}>
                          <SummaryLabel scope="row">{s.label}</SummaryLabel>
                          <SummaryValue $pad={s.pad}>{s.value}</SummaryValue>
                          {s.label2 && <SummaryLabel scope="row" $right>{s.label2}</SummaryLabel>}
                          {s.value2 && <SummaryValue $pad={10}>{s.value2}</SummaryValue>}
                        </SummaryRow>
                      ))}
                    </tbody>
                  </Table>
                </SummaryArea>
                <SectionBand $center>年数</SectionBand>
                <PayTable>
                  <thead>
                    <tr>
                      <PayHead $left scope="col">利率</PayHead>
                      {years.map((y) => <PayHead key={y} scope="col">{y}</PayHead>)}
                    </tr>
                  </thead>
                  <tbody>
                    {payments.map(([rate, ...values], i) => (
                      <PayRow key={rate} $tone={toneFor(rate, i)}>
                        <RateCell scope="row">{rate}</RateCell>
                        {values.map((v, j) => <PayCell key={j}>¥{v}</PayCell>)}
                      </PayRow>
                    ))}
                  </tbody>
                </PayTable>
              </Content>
              <Slicer>
                <SlicerTitle>利率</SlicerTitle>
                <SlicerGrid>
                  {slicerItems.map((s) => <SlicerButton key={s}>{s}</SlicerButton>)}
                </SlicerGrid>
              </Slicer>
            </SheetBody>
          </Sheet>
          <VScroll>
            <ScrollButton aria-label="向上滚动"><Triangle dir="up" /></ScrollButton>
            <Track><Thumb /></Track>
            <ScrollButton aria-label="向下滚动"><Triangle dir="down" /></ScrollButton>
          </VScroll>
        </SheetArea>

        <SheetTabs>
          <IconButton $w={28} aria-label="上一张工作表"><Triangle dir="left" color="#c0c0c0" /></IconButton>
          <IconButton $w={28} aria-label="下一张工作表"><Triangle dir="right" color="#c0c0c0" /></IconButton>
          <SheetTab><SheetTabFace>贷款分析</SheetTabFace></SheetTab>
          <IconButton $w={20} aria-label="新工作表"><AddIcon /></IconButton>
          <Spacer />
          <Grip><DotsIcon /></Grip>
          <HScroll>
            <ScrollButton aria-label="向左滚动"><Triangle dir="left" /></ScrollButton>
            <Track $horizontal><Thumb $horizontal /></Track>
            <ScrollButton aria-label="向右滚动"><Triangle dir="right" /></ScrollButton>
          </HScroll>
        </SheetTabs>
        <StatusBar>
          <span>就绪</span>
          <Spacer />
          <IconButton $w={38} $on aria-label="普通"><NormalView /></IconButton>
          <IconButton $w={38} aria-label="页面布局"><LayoutView /></IconButton>
          <IconButton $w={38} aria-label="分页预览"><BreakView /></IconButton>
          <IconButton $w={15} aria-label="缩小"><Svg w={6} h={2} crisp><path d="M0 0h6v2H0z" fill="#666" /></Svg></IconButton>
          <ZoomSlider type="range" min={0} max={100} defaultValue={50} aria-label="显示比例" />
          <IconButton $w={13} aria-label="放大"><Svg w={8} h={8} crisp><path d="M3 0h2v8H3zM0 3h8v2H0z" fill="#666" /></Svg></IconButton>
          <ZoomValue>100%</ZoomValue>
        </StatusBar>
      </Workspace>
    </Shell>
  );
}
